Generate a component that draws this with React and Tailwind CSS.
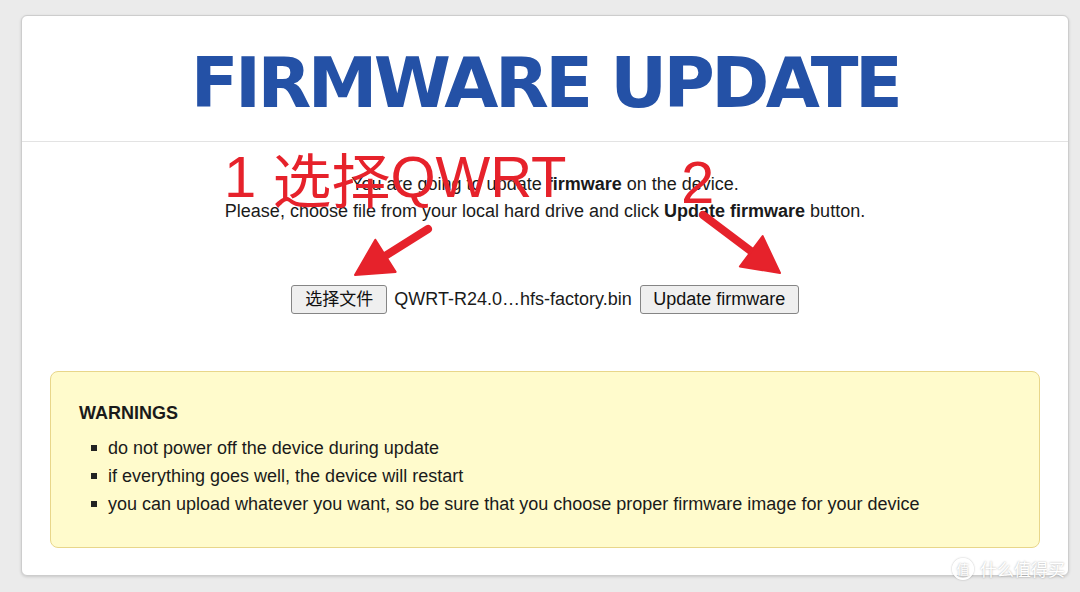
const warnings = [
  'do not power off the device during update',
  'if everything goes well, the device will restart',
  'you can upload whatever you want, so be sure that you choose proper firmware image for your device',
]

function Arrow({ x1, y1, x2, y2 }) {
  // red marker arrow: thick shaft plus a wide triangular head
  const dx = x2 - x1
  const dy = y2 - y1
  const len = Math.hypot(dx, dy)
  const ux = dx / len
  const uy = dy / len
  const head = 36
  const half = 19
  const bx = x2 - ux * head
  const by = y2 - uy * head
  const px = -uy
  const py = ux
  return (
    <g fill="#e6222b" stroke="#e6222b">
      <line x1={x1} y1={y1} x2={bx + ux * 4} y2={by + uy * 4} strokeWidth="8" strokeLinecap="round" />
      <polygon
        points={`${x2},${y2} ${bx + px * half},${by + py * half} ${bx - px * half},${by - py * half}`}
        strokeWidth="2"
        strokeLinejoin="round"
      />
    </g>
  )
}

export default function App() {
  return (
    <div className="relative min-h-screen bg-[#ebebeb] pt-[15px] pl-[21px] overflow-hidden" style={{ height: 592 }}>
      <div className="w-[1048px] h-[561px] bg-white rounded-md border border-[#cdcdcd] shadow-[0_1px_3px_rgba(0,0,0,0.15)] overflow-hidden font-['Liberation_Sans','Noto_Sans_CJK_SC',sans-serif] text-[#1a1a1a]">
        {/* Header */}
        <div className="h-[126px] border-b border-[#e3e3e3] flex items-center justify-center pt-[8px]">
          <h1 className="font-['DejaVu_Sans',sans-serif] font-bold text-[70px] leading-none text-[#2451a6] tracking-[-3.6px]">
            FIRMWARE UPDATE
          </h1>
        </div>

        {/* Body */}
        <div className="pt-[29px] px-[28px]">
          <div className="text-center text-[18px] leading-[27px]">
            <p>
              You are going to update <b>firmware</b> on the device.
            </p>
            <p>
              Please, choose file from your local hard drive and click <b>Update firmware</b> button.
            </p>
          </div>

          <div className="mt-[60px] flex items-center justify-center text-[18px]">
            <button className="h-[29px] w-[96px] bg-[#efefef] border border-[#858585] rounded-[3px] text-[#111] text-[17px]">
              选择文件
            </button>
            <span className="ml-[7px] mr-[8px]">QWRT-R24.0…hfs-factory.bin</span>
            <button className="h-[29px] w-[159px] bg-[#efefef] border border-[#858585] rounded-[3px] text-[#111] text-[18px]">
              Update firmware
            </button>
          </div>

          <div className="mt-[57px] h-[177px] bg-[#fffbcc] border border-[#e8d68a] rounded-lg pl-[28px] pt-[30px]">
            <h2 className="font-bold text-[18px] leading-[22px]">WARNINGS</h2>
            <ul className="mt-[10px] pl-[12px] text-[18px] leading-[28px]">
              {warnings.map((w) => (
                <li key={w} className="flex items-center">
                  <span className="w-[6px] h-[6px] bg-[#222] mr-[11px] shrink-0" />
                  {w}
                </li>
              ))}
            </ul>
          </div>
        </div>
      </div>

      {/* Red annotations drawn over the page */}
      <div className="absolute left-[224px] top-[148px] text-[#e6222b] text-[58px] leading-none font-['Liberation_Sans','Noto_Sans_CJK_SC',sans-serif] whitespace-nowrap">
        1 <span className="relative top-[6px] text-[59px]">选择</span>QWRT
      </div>
      <div className="absolute left-[681px] top-[153px] text-[#e6222b] text-[60px] leading-none font-['Liberation_Sans',sans-serif]">
        2
      </div>
      <svg className="absolute left-0 top-0 pointer-events-none" width="1080" height="592">
        <Arrow x1={428} y1={229} x2={355} y2={275} />
        <Arrow x1={703} y1={215} x2={780} y2={273} />
      </svg>

      {/* Watermark */}
      <div className="absolute left-[952px] top-[556px] flex items-center gap-[6px] text-white text-[17px] font-['Noto_Sans_CJK_SC',sans-serif] [text-shadow:0_0_2px_rgba(0,0,0,0.35)]">
        <span className="w-[22px] h-[22px] rounded-full border-2 border-white flex items-center justify-center text-[13px] leading-none shadow-[0_0_2px_rgba(0,0,0,0.3)]">
          值
        </span>
        什么值得买
      </div>
    </div>
  )
}
